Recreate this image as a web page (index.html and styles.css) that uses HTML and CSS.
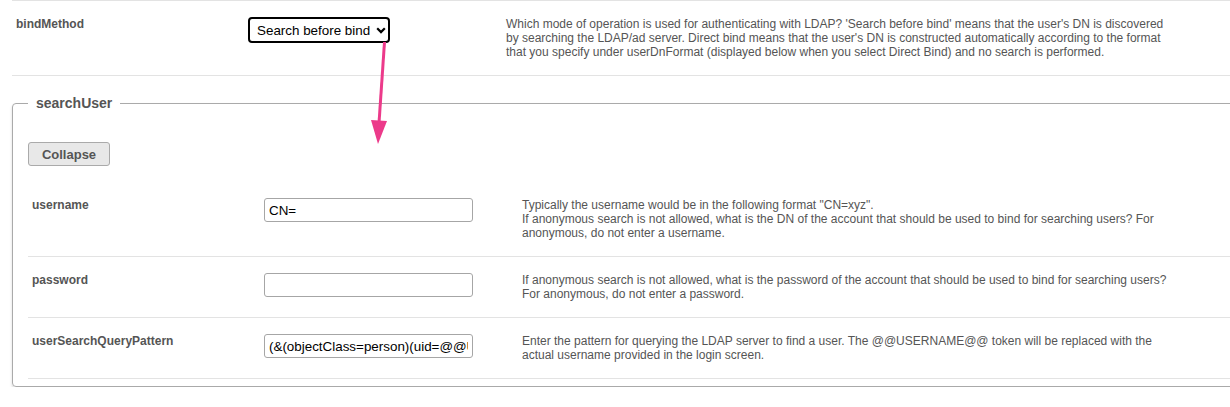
FILE: index.html
```html
<!DOCTYPE html>
<html>
<head>
<meta charset="utf-8">
<link rel="stylesheet" href="styles.css">
</head>
<body>
<div class="page">
  <div class="row top-row">
    <div class="label">bindMethod</div>
    <div class="field">
      <div class="select-wrap">
        <select class="select"><option>Search before bind</option><option>Direct bind</option></select>
        <svg class="chevron" width="10" height="7" viewBox="0 0 10 7"><path d="M1.2 1.3 L5 5.1 L8.8 1.3" fill="none" stroke="#000" stroke-width="2.2"/></svg>
      </div>
    </div>
    <div class="desc">Which mode of operation is used for authenticating with LDAP? 'Search before bind' means that the user's DN is discovered<br>by searching the LDAP/ad server. Direct bind means that the user's DN is constructed automatically according to the format<br>that you specify under userDnFormat (displayed below when you select Direct Bind) and no search is performed.</div>
  </div>

  <fieldset class="group">
    <legend class="legend">searchUser</legend>
    <button class="collapse" type="button">Collapse</button>

    <div class="row">
      <div class="label">username</div>
      <div class="field"><input class="input" type="text" value="CN="></div>
      <div class="desc">Typically the username would be in the following format "CN=xyz".<br>If anonymous search is not allowed, what is the DN of the account that should be used to bind for searching users? For<br>anonymous, do not enter a username.</div>
    </div>

    <div class="row">
      <div class="label">password</div>
      <div class="field"><input class="input" type="password" value=""></div>
      <div class="desc">If anonymous search is not allowed, what is the password of the account that should be used to bind for searching users?<br>For anonymous, do not enter a password.</div>
    </div>

    <div class="row">
      <div class="label">userSearchQueryPattern</div>
      <div class="field"><input class="input" type="text" value="(&amp;(objectClass=person)(uid=@@USERNAME@@))"></div>
      <div class="desc">Enter the pattern for querying the LDAP server to find a user. The @@USERNAME@@ token will be replaced with the<br>actual username provided in the login screen.</div>
    </div>
  </fieldset>

  <svg class="arrow" width="1230" height="407" viewBox="0 0 1230 407">
    <line x1="384.5" y1="42" x2="379" y2="123" stroke="#ec3a8a" stroke-width="3"/>
    <polygon points="371,120 387,121 378,144" fill="#ec3a8a"/>
  </svg>
</div>
</body>
</html>
```

FILE: styles.css
```css
html, body {
  margin: 0;
  padding: 0;
  background: #fff;
  overflow: hidden;
}

body {
  font-family: "Liberation Sans", Arial, sans-serif;
}

.page {
  position: relative;
  padding-left: 12px;
  width: 1240px;
}

.row {
  display: flex;
  align-items: flex-start;
  padding: 16px 4px;
  border-bottom: 1px solid #e3e3e3;
}

.top-row {
  border-top: 1px solid #e3e3e3;
}

.label {
  flex: none;
  width: 232px;
  font-size: 12px;
  line-height: 14px;
  font-weight: bold;
  color: #555;
}

.field {
  flex: none;
  width: 258px;
}

.desc {
  flex: 1;
  font-size: 12px;
  line-height: 14px;
  color: #555;
  white-space: nowrap;
}

.select-wrap {
  position: relative;
  display: inline-block;
  vertical-align: top;
}

.select {
  -webkit-appearance: none;
  appearance: none;
  display: block;
  box-sizing: border-box;
  width: 142px;
  height: 26px;
  border: 2px solid #000;
  border-radius: 4px;
  padding: 0 0 0 7px;
  font-family: "Liberation Sans", Arial, sans-serif;
  font-size: 13.4px;
  color: #000;
  background: #fff;
}

.chevron {
  position: absolute;
  right: 4px;
  top: 10px;
  pointer-events: none;
}

.input {
  box-sizing: border-box;
  display: block;
  width: 209px;
  height: 24px;
  border: 1px solid #a6a6a6;
  border-radius: 3px;
  padding: 0 4px;
  font-family: "Liberation Sans", Arial, sans-serif;
  font-size: 13.4px;
  color: #000;
  background: #fff;
}

.group {
  margin: 19px -20px 0 0;
  padding: 0 15px 7px;
  border: 1px solid #aaa;
  border-radius: 4px;
  box-shadow: 0 2px 3px rgba(0, 0, 0, 0.15);
  min-width: 0;
}

.legend {
  padding: 0 8px;
  font-size: 14px;
  line-height: 16px;
  font-weight: bold;
  color: #555;
}

.collapse {
  display: block;
  box-sizing: border-box;
  margin: 31px 0 16px;
  width: 82px;
  height: 24px;
  padding: 0;
  font-family: "Liberation Sans", Arial, sans-serif;
  font-size: 13px;
  font-weight: bold;
  color: #555;
  background: #e8e8e8;
  border: 1px solid #aaa;
  border-radius: 3px;
}

.arrow {
  position: absolute;
  top: 0;
  left: 0;
  pointer-events: none;
}
```
